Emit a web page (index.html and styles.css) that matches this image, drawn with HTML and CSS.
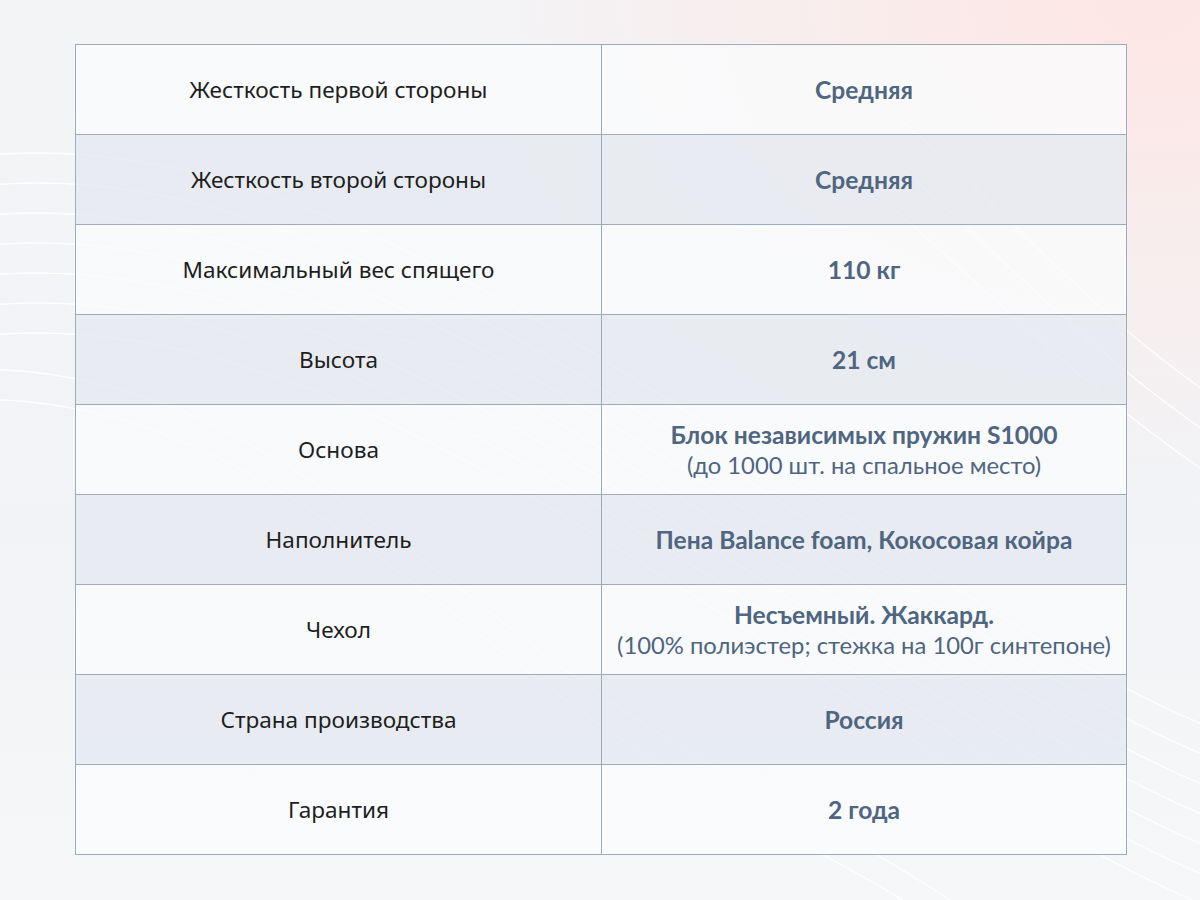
FILE: index.html
```html
<!DOCTYPE html>
<html lang="ru">
<head>
<meta charset="utf-8">
<title>Характеристики</title>
<link rel="stylesheet" href="styles.css">
</head>
<body>
<div class="page">
  <svg class="waves" width="1200" height="900" viewBox="0 0 1200 900" aria-hidden="true">
    <g fill="none" stroke="#ffffff" stroke-width="1.5" opacity="0.9">
      <path d="M-50 160 C 200 120, 450 260, 700 420 S 1100 700, 1300 760"/>
      <path d="M-50 190 C 200 150, 450 290, 700 450 S 1100 730, 1300 790"/>
      <path d="M-50 220 C 200 180, 450 320, 700 480 S 1100 760, 1300 820"/>
      <path d="M-50 250 C 200 210, 450 350, 700 510 S 1100 790, 1300 850"/>
      <path d="M-50 280 C 200 240, 450 380, 700 540 S 1100 820, 1300 880"/>
      <path d="M-50 310 C 200 270, 450 410, 700 570 S 1100 850, 1300 910"/>
      <path d="M-50 340 C 200 300, 450 440, 700 600 S 1100 880, 1300 940"/>
      <path d="M-50 370 C 150 360, 300 460, 500 620 S 800 800, 950 900"/>
      <path d="M-50 400 C 150 390, 300 490, 500 650 S 800 830, 950 930"/>
      <path d="M900 120 C 1000 200, 1100 330, 1250 420"/>
      <path d="M880 150 C 990 240, 1100 370, 1250 460"/>
      <path d="M860 180 C 980 280, 1100 410, 1250 500"/>
    </g>
  </svg>
  <table class="specs">
    <tbody>
      <tr class="row">
        <td class="label">Жесткость первой стороны</td>
        <td class="value">Средняя</td>
      </tr>
      <tr class="row alt">
        <td class="label">Жесткость второй стороны</td>
        <td class="value">Средняя</td>
      </tr>
      <tr class="row">
        <td class="label">Максимальный вес спящего</td>
        <td class="value">110 кг</td>
      </tr>
      <tr class="row alt">
        <td class="label">Высота</td>
        <td class="value">21 см</td>
      </tr>
      <tr class="row">
        <td class="label">Основа</td>
        <td class="value">Блок независимых пружин S1000<span class="note">(до 1000 шт. на спальное место)</span></td>
      </tr>
      <tr class="row alt">
        <td class="label">Наполнитель</td>
        <td class="value">Пена Balance foam, Кокосовая койра</td>
      </tr>
      <tr class="row">
        <td class="label">Чехол</td>
        <td class="value">Несъемный. Жаккард.<span class="note">(100% полиэстер; стежка на 100г синтепоне)</span></td>
      </tr>
      <tr class="row alt">
        <td class="label">Страна производства</td>
        <td class="value">Россия</td>
      </tr>
      <tr class="row">
        <td class="label">Гарантия</td>
        <td class="value">2 года</td>
      </tr>
    </tbody>
  </table>
</div>
</body>
</html>
```

FILE: styles.css
```css
html, body {
  margin: 0;
  padding: 0;
}

body {
  width: 1200px;
  height: 900px;
  overflow: hidden;
  background:
    radial-gradient(ellipse 700px 500px at 1150px 0px, #fde6e4 0%, rgba(253, 230, 228, 0.55) 45%, rgba(253, 230, 228, 0) 100%),
    linear-gradient(180deg, #f3f4f6 0%, #f1f3f6 60%, #f6f7f8 100%);
  font-family: "Open Sans", "Noto Sans", sans-serif;
}

.page {
  position: relative;
  width: 1200px;
  height: 900px;
  padding-top: 44px;
  padding-left: 75px;
  box-sizing: border-box;
}

.waves {
  position: absolute;
  left: 0;
  top: 0;
  pointer-events: none;
}

.specs {
  position: relative;
  width: 1052px;
  border-collapse: collapse;
  table-layout: fixed;
}

.row td {
  height: 89px;
  padding: 0;
  border: 1px solid #9eabbb;
  text-align: center;
  vertical-align: middle;
  background: rgba(250, 251, 252, 0.82);
}

.row.alt td {
  background: rgba(229, 234, 240, 0.82);
}

.label {
  width: 525px;
  font-family: "Noto Sans", "Open Sans", sans-serif;
  font-size: 22.6px;
  color: #1e1e1e;
}

.value {
  font-family: "Lato", "Open Sans", sans-serif;
  font-weight: 700;
  font-size: 24.6px;
  color: #4f6580;
  line-height: 30px;
  padding-top: 4px;
}

.note {
  display: block;
  font-weight: 400;
  font-size: 23.8px;
  line-height: 30px;
}
```
